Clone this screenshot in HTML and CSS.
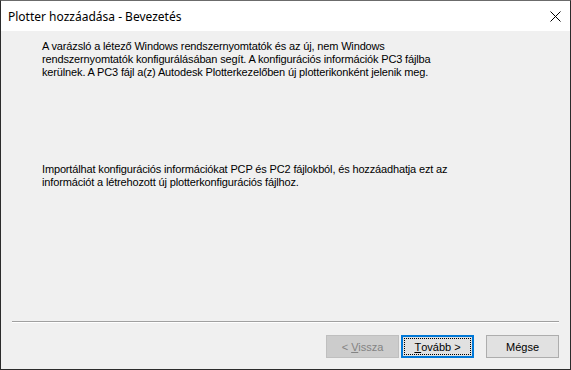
FILE: index.html
```html
<!DOCTYPE html>
<html lang="hu">
<head>
    <meta charset="UTF-8">
    <title>Plotter hozzáadása - Bevezetés</title>
    <link rel="stylesheet" href="styles.css">
</head>
<body>
    <div class="window">
        <div class="titlebar">
            <span class="title">Plotter hozzáadása - Bevezetés</span>
            <svg class="close" width="11" height="11" viewBox="0 0 11 11">
                <path d="M0.5 0.5 L10.5 10.5 M10.5 0.5 L0.5 10.5" stroke="#000" stroke-width="1" fill="none"/>
            </svg>
        </div>
        <div class="content">
            <p class="intro">A varázsló a létező Windows rendszernyomtatók és az új, nem Windows<br>
            rendszernyomtatók konfigurálásában segít. A konfigurációs információk PC3 fájlba<br>
            kerülnek. A PC3 fájl a(z) Autodesk Plotterkezelőben új plotterikonként jelenik meg.</p>
            <p class="import">Importálhat konfigurációs információkat PCP és PC2 fájlokból, és hozzáadhatja ezt az<br>
            információt a létrehozott új plotterkonfigurációs fájlhoz.</p>
            <div class="separator"></div>
            <div class="buttons">
                <button class="btn" disabled>&lt; <u>V</u>issza</button>
                <button class="btn default"><span class="focus"><u>T</u>ovább &gt;</span></button>
                <button class="btn cancel">Mégse</button>
            </div>
        </div>
    </div>
</body>
</html>
```

FILE: styles.css
```css
body { margin: 0; background: #f0f0f0; }
.window { width: 571px; height: 370px; box-sizing: border-box; border: 1px solid #2b2b2b; border-top-color: #6b6b6b; display: flex; flex-direction: column; }
.titlebar { height: 30px; background: #fff; display: flex; align-items: center; justify-content: space-between; padding: 0 9px 0 7px; }
.title { font-family: "Noto Sans", "Open Sans", sans-serif; font-size: 12px; color: #000; }
.close { display: block; }
.content { flex: 1; background: #f0f0f0; display: flex; flex-direction: column; font-family: "Liberation Sans", Arial, sans-serif; font-size: 11px; line-height: 13px; color: #000; }
p { margin: 0; padding-left: 41px; letter-spacing: -0.15px; }
.intro { margin-top: 9px; }
.import { margin-top: 84px; }
.separator { margin: auto 11px 0 11px; height: 1px; background: #a0a0a0; border-bottom: 1px solid #fff; }
.buttons { display: flex; justify-content: flex-end; padding: 12px 11px 11px 0; }
.btn { width: 73px; height: 23px; box-sizing: border-box; font-family: "Liberation Sans", Arial, sans-serif; font-size: 11px; color: #000; background: #e1e1e1; border: 1px solid #adadad; padding: 0; margin: 0; }
.btn:disabled { background: #cccccc; border-color: #bfbfbf; color: #838383; margin-right: 2px; }
.default { border: 2px solid #0078d7; padding: 1px; }
.focus { display: flex; align-items: center; justify-content: center; height: 100%; box-sizing: border-box; border: 1px dotted #000; }
.cancel { margin-left: 12px; }
```
